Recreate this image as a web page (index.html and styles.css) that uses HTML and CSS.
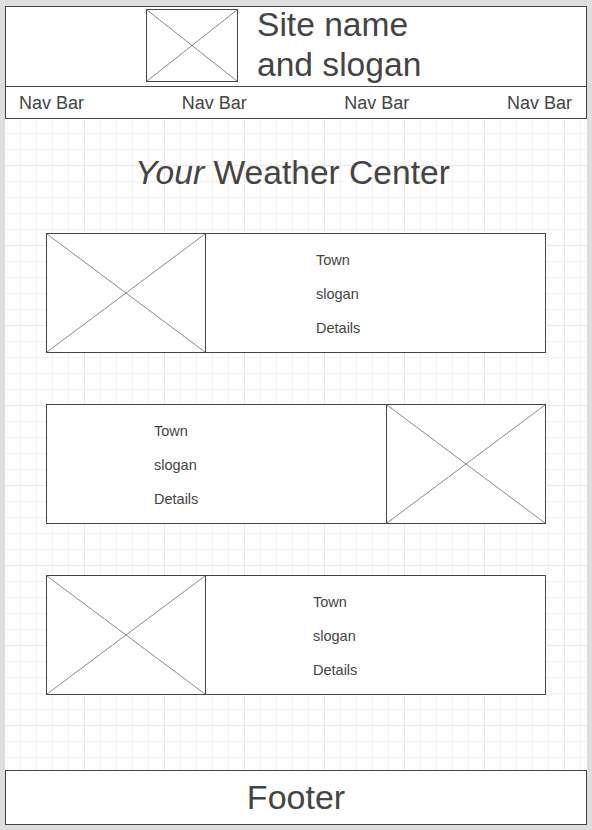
FILE: index.html
```html
<!DOCTYPE html>
<html lang="en">
<head>
<meta charset="utf-8">
<title>Your Weather Center</title>
<link rel="stylesheet" href="styles.css">
</head>
<body>
<div class="page">
  <header class="header">
    <div class="brand">
      <div class="logo">
        <svg class="xsvg" viewBox="0 0 100 100" preserveAspectRatio="none"><line x1="0" y1="0" x2="100" y2="100"/><line x1="100" y1="0" x2="0" y2="100"/></svg>
      </div>
      <div class="site-name">Site name<br>and slogan</div>
    </div>
    <nav class="nav">
      <span>Nav Bar</span>
      <span>Nav Bar</span>
      <span>Nav Bar</span>
      <span>Nav Bar</span>
    </nav>
  </header>
  <main class="main">
    <h1 class="title"><em>Your</em> Weather Center</h1>
    <div class="cards">
      <div class="card">
        <div class="card-img img-left">
          <svg class="xsvg" viewBox="0 0 100 100" preserveAspectRatio="none"><line x1="0" y1="0" x2="100" y2="100"/><line x1="100" y1="0" x2="0" y2="100"/></svg>
        </div>
        <div class="card-text text-a">
          <div>Town</div>
          <div>slogan</div>
          <div>Details</div>
        </div>
      </div>
      <div class="card">
        <div class="card-text text-b">
          <div>Town</div>
          <div>slogan</div>
          <div>Details</div>
        </div>
        <div class="card-img img-right">
          <svg class="xsvg" viewBox="0 0 100 100" preserveAspectRatio="none"><line x1="0" y1="0" x2="100" y2="100"/><line x1="100" y1="0" x2="0" y2="100"/></svg>
        </div>
      </div>
      <div class="card">
        <div class="card-img img-left">
          <svg class="xsvg" viewBox="0 0 100 100" preserveAspectRatio="none"><line x1="0" y1="0" x2="100" y2="100"/><line x1="100" y1="0" x2="0" y2="100"/></svg>
        </div>
        <div class="card-text text-b">
          <div>Town</div>
          <div>slogan</div>
          <div>Details</div>
        </div>
      </div>
    </div>
  </main>
  <footer class="footer">Footer</footer>
</div>
</body>
</html>
```

FILE: styles.css
```css
html, body {
  margin: 0;
  padding: 0;
}
body {
  background: #dedede;
  font-family: "Liberation Sans", Arial, sans-serif;
  color: #444;
}
.page {
  margin: 6px 0 0 5px;
  width: 582px;
  height: 819px;
  box-sizing: border-box;
  display: flex;
  flex-direction: column;
  background-color: #fff;
  background-image:
    linear-gradient(to right, #e9e9e9 1px, transparent 1px),
    linear-gradient(to bottom, #e9e9e9 1px, transparent 1px),
    linear-gradient(to right, #f2f2f2 1px, transparent 1px),
    linear-gradient(to bottom, #f2f2f2 1px, transparent 1px);
  background-size: 80px 80px, 80px 80px, 16px 16px, 16px 16px;
  background-position: -1px -1px, -1px -1px, -1px -1px, -1px -1px;
}
.header {
  border: 1px solid #444;
  background: #fff;
  height: 113px;
  box-sizing: border-box;
  display: flex;
  flex-direction: column;
}
.brand {
  height: 79px;
  display: flex;
  align-items: flex-start;
  padding-left: 140px;
  border-bottom: 1px solid #444;
}
.logo {
  width: 90px;
  height: 71px;
  margin-top: 2px;
  border: 1px solid #444;
  display: flex;
}
.xsvg {
  width: 100%;
  height: 100%;
  display: block;
}
.xsvg line {
  stroke: #8a8a8a;
  stroke-width: 1;
  vector-effect: non-scaling-stroke;
}
.site-name {
  margin-left: 19px;
  margin-top: -2px;
  font-size: 33.6px;
  line-height: 40px;
}
.nav {
  flex: 1;
  display: flex;
  justify-content: space-between;
  align-items: center;
  padding: 2px 14px 0 13px;
  font-size: 18px;
  line-height: 29px;
}
.main {
  flex: 1;
  padding-top: 34px;
  display: flex;
  flex-direction: column;
  align-items: center;
}
.title {
  margin: 0 7px 40px 0;
  font-size: 33.6px;
  line-height: 40px;
  font-weight: normal;
}
.title em {
  font-style: italic;
}
.cards {
  display: flex;
  flex-direction: column;
  gap: 51px;
}
.card {
  width: 500px;
  height: 120px;
  box-sizing: border-box;
  border: 1px solid #444;
  background: #fff;
  display: flex;
}
.card-img {
  width: 159px;
  box-sizing: border-box;
  display: flex;
}
.img-left {
  border-right: 1px solid #444;
}
.img-right {
  border-left: 1px solid #444;
}
.card-text {
  flex: 1;
  padding-top: 9px;
  font-size: 14.5px;
  line-height: 34px;
}
.text-a {
  padding-left: 110px;
}
.text-b {
  padding-left: 107px;
}
.footer {
  height: 55px;
  box-sizing: border-box;
  border: 1px solid #444;
  background: #fff;
  text-align: center;
  font-size: 34px;
  line-height: 53px;
}
```
